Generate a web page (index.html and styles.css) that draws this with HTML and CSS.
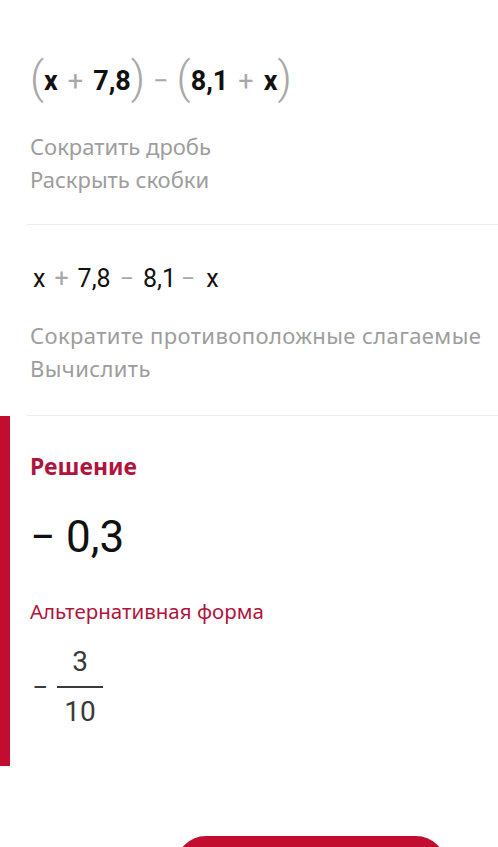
FILE: index.html
```html
<!DOCTYPE html>
<html lang="ru">

<head>
    <meta charset="UTF-8">
    <meta name="viewport" content="width=device-width, initial-scale=1.0">
    <title>Решение</title>
    <link rel="stylesheet" href="styles.css">
</head>

<body>
    <div class="page">
        <!-- шаг 1 -->
        <div class="step">
            <div class="expr expr-bold">
                <span class="paren">(</span><span class="num">x</span><span class="op">+</span><span class="num">7,8</span><span class="paren">)</span><span class="op op-tight">−</span><span class="paren">(</span><span class="num">8,1</span><span class="op">+</span><span class="num">x</span><span class="paren">)</span>
            </div>
            <div class="hints">
                <p>Сократить дробь</p>
                <p>Раскрыть скобки</p>
            </div>
        </div>
        <div class="divider"></div>

        <!-- шаг 2 -->
        <div class="step step-second">
            <div class="expr expr-plain">
                <span class="num">x</span><span class="op">+</span><span class="num">7,8</span><span class="op">−</span><span class="num">8,1</span><span class="op op-left">−</span><span class="num">x</span>
            </div>
            <div class="hints">
                <p>Сократите противоположные слагаемые</p>
                <p>Вычислить</p>
            </div>
        </div>
        <div class="divider"></div>

        <!-- ответ -->
        <div class="solution">
            <h2 class="title">Решение</h2>
            <div class="answer">− 0,3</div>
            <h3 class="subtitle">Альтернативная форма</h3>
            <div class="alt">
                <span class="minus">−</span>
                <span class="frac">
                    <span class="top">3</span>
                    <span class="bar"></span>
                    <span class="bottom">10</span>
                </span>
            </div>
        </div>

        <div class="btn-wrap">
            <div class="btn"></div>
        </div>
    </div>
</body>

</html>
```

FILE: styles.css
```css
* {
    margin: 0;
    padding: 0;
}

body {
    background-color: #fff;
    font-family: Roboto, "Noto Sans", sans-serif;
    overflow: hidden;
}

.page {
    width: 498px;
    height: 847px;
    overflow: hidden;
}

.step {
    padding: 57px 0 0 30px;
}

.step-second {
    padding-top: 41px;
    padding-left: 33px;
}

.expr {
    display: flex;
    align-items: center;
    height: 48px;
    color: #111;
}

.expr-bold {
    font-size: 27px;
    font-weight: bold;
}

.expr-plain {
    font-size: 25px;
    height: 24px;
}

.paren {
    font-size: 44px;
    font-weight: 300;
    color: #a8a8a8;
    line-height: 1;
    position: relative;
    top: -3px;
}

.op {
    color: #a8a8a8;
    font-weight: normal;
    margin: 0 10px;
}

.expr-plain .op {
    margin: 0 9px;
}

.op-tight {
    margin: 0 8px;
}

.expr-plain .op-left {
    margin: 0 11px 0 5px;
}

.hints {
    padding: 25px 0 0;
    color: #9d9d9d;
    font-family: "Noto Sans", sans-serif;
    font-size: 22px;
    line-height: 33px;
}

.step-second .hints {
    padding-top: 29px;
    margin-left: -3px;
    letter-spacing: 0.4px;
}

.divider {
    height: 1px;
    margin: 28px 0 0 27px;
    background-color: #eeeeee;
}

.step-second + .divider {
    margin-top: 30px;
}

.solution {
    padding: 33px 0 28px 20px;
    border-left: 10px solid #c20c30;
    height: 289px;
}

.title {
    color: #b0143c;
    font-family: "Noto Sans", sans-serif;
    font-size: 23px;
    font-weight: bold;
    line-height: 34px;
}

.answer {
    margin-top: 30px;
    font-size: 44px;
    line-height: 48px;
    color: #111;
}

.subtitle {
    margin-top: 36px;
    color: #b0143c;
    font-family: "Noto Sans", sans-serif;
    font-size: 20.5px;
    font-weight: normal;
    line-height: 28px;
}

.alt {
    display: flex;
    align-items: center;
    margin-top: 25px;
    color: #3a3a3a;
    font-size: 28px;
}

.minus {
    margin: 0 9px 0 2px;
}

.frac {
    display: flex;
    flex-direction: column;
    align-items: center;
}

.frac .top,
.frac .bottom {
    line-height: 24px;
}

.bar {
    width: 46px;
    height: 2px;
    margin: 12px 0;
    background-color: #3a3a3a;
}

.btn-wrap {
    padding: 70px 0 0 176px;
}

.btn {
    width: 270px;
    height: 60px;
    border-radius: 30px;
    background-color: #c20c30;
}
```
